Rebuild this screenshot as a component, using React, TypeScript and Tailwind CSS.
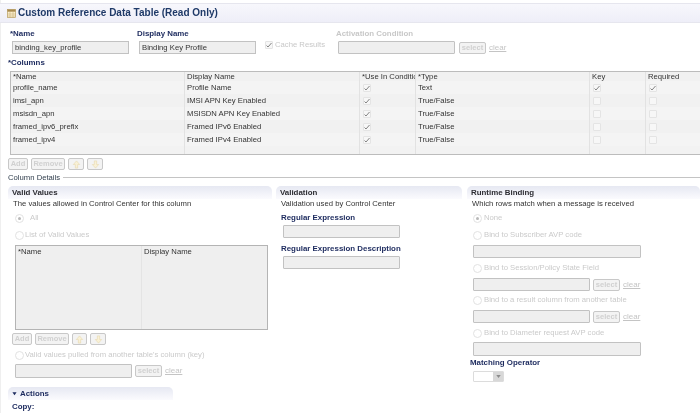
import React from "react";

const Inp = ({ w, className = "" }: { w: string; className?: string }) => (
  <div className={`${w} h-[13px] shrink-0 rounded-[1px] border border-[#c2c2c2] bg-[#efefef] ${className}`} />
);
const Btn = ({ children, w }: { children?: React.ReactNode; w: string }) => (
  <div className={`${w} flex h-[12px] shrink-0 items-center justify-center rounded-[2px] border border-[#c8c8c8] bg-[#f3f3f3] text-[7.5px] leading-none font-bold text-[#d0d0d0]`}>{children}</div>
);
const Arrow = ({ down }: { down?: boolean }) => (
  <svg viewBox="0 0 10 10" className={`h-[9px] w-[9px] ${down ? "rotate-180" : ""}`}>
    <path d="M5 1 8.5 5H6.3V9H3.7V5H1.5Z" fill="#f9f1d6" stroke="#e8dbb0" strokeWidth="0.7" />
  </svg>
);
const SelectClear = ({ gap = "ml-[3px]" }: { gap?: string }) => (
  <>
    <div className={gap}><Btn w="w-[27px]">select</Btn></div>
    <span className="ml-[3px] text-[8px] leading-none text-[#c4c4c4] underline">clear</span>
  </>
);
const Radio = ({ on, label, className = "", labelGap = "ml-[1px]" }: { on?: boolean; label: string; className?: string; labelGap?: string }) => (
  <div className={`flex h-[10px] items-center text-[7.7px] leading-none text-[#cacaca] ${className}`}>
    <span className="flex h-[9px] w-[9px] shrink-0 items-center justify-center rounded-full border border-[#e2e2e2] bg-white">
      {on && <span className="h-[3px] w-[3px] rounded-full bg-[#b8b8b8]" />}
    </span>
    <span className={`${labelGap} whitespace-nowrap`}>{label}</span>
  </div>
);
const Check = ({ on }: { on?: boolean }) => (
  <span className="flex h-[8px] w-[8px] shrink-0 items-center justify-center rounded-[1px] border border-[#e4e4e4] bg-[#f7f7f7]">
    {on && (
      <svg viewBox="0 0 8 8" className="h-[8px] w-[8px] shrink-0">
        <path d="M1.5 4.5 3 6 6.5 2" fill="none" stroke="#666" strokeWidth="0.8" />
      </svg>
    )}
  </span>
);
const Label = ({ children, className = "" }: { children: React.ReactNode; className?: string }) => (
  <div className={`whitespace-nowrap text-[7.9px] leading-[10px] font-bold text-[#1c2a5e] ${className}`}>{children}</div>
);
const SectionHead = ({ children, w }: { children: React.ReactNode; w: string }) => (
  <div className={`${w} flex h-[13px] items-center rounded-t-[5px] bg-gradient-to-b from-[#e6e8f2] to-[#fbfbfe] pl-[4px] text-[7.9px] font-bold text-[#2d2d33]`}>{children}</div>
);

const rows = [
  ["profile_name", "Profile Name", "Text", true],
  ["imsi_apn", "IMSI APN Key Enabled", "True/False", false],
  ["msisdn_apn", "MSISDN APN Key Enabled", "True/False", false],
  ["framed_ipv6_prefix", "Framed IPv6 Enabled", "True/False", false],
  ["framed_ipv4", "Framed IPv4 Enabled", "True/False", false],
] as const;
const cell = "flex shrink-0 items-center overflow-hidden whitespace-nowrap border-r border-[#e2e2e2] pl-[2px]";

export default function App() {
  return (
    <div className="h-[413px] w-[700px] overflow-hidden bg-white pt-[3px] text-[7.7px] text-[#333] shadow-[inset_1px_0_0_#efefef] blur-[0.3px]" style={{ fontFamily: '"Liberation Sans", Arial, sans-serif' }}>
      <div className="flex h-[20px] items-center border-y border-[#e6e6ee] bg-gradient-to-b from-[#f7f7fc] to-[#eeeef8] pl-[7px]">
        <svg viewBox="0 0 9 9" className="h-[9px] w-[9px]">
          <rect x="0.5" y="0.5" width="8" height="8" fill="#fbeecb" stroke="#b89e62" strokeWidth="0.7" />
          <rect x="0.5" y="0.5" width="8" height="2.2" fill="#a88a4e" />
          <path d="M0 5H9M0 7H9M3 2V9M6 2V9" stroke="#c0a873" strokeWidth="0.5" />
        </svg>
        <div className="ml-[2px] text-[10px] leading-none font-bold text-[#1f3a68]">Custom Reference Data Table (Read Only)</div>
      </div>

      <div className="mt-[6px] flex h-[27px]">
        <div className="ml-[10px] w-[127px]">
          <Label>*Name</Label>
          <div className="mt-[2px] ml-[2px] flex h-[13px] w-[117px] items-center border border-[#c2c2c2] bg-[#efefef] pl-[2px] leading-none">binding_key_profile</div>
        </div>
        <div className="w-[128px]">
          <Label>Display Name</Label>
          <div className="mt-[2px] ml-[2px] flex h-[13px] w-[117px] items-center border border-[#c2c2c2] bg-[#efefef] pl-[2px] leading-none">Binding Key Profile</div>
        </div>
        <div className="mt-[12px] flex h-[8px] w-[71px] items-center text-[#c8c8c8]">
          <Check on />
          <span className="ml-[2px] leading-none">Cache Results</span>
        </div>
        <div>
          <Label className="text-[#c8c8c8]">Activation Condition</Label>
          <div className="mt-[2px] ml-[2px] flex items-center">
            <Inp w="w-[117px]" />
            <SelectClear gap="ml-[4px]" />
          </div>
        </div>
      </div>

      <Label className="mt-[2px] ml-[8px]">*Columns</Label>
      <div className="mt-[3px] ml-[10px] h-[84px] border-y border-l border-[#bcbcbc] bg-[#f2f2f2]">
        <div className="flex h-[9px] bg-[#f1f1f1] leading-none">
          <div className={`${cell} w-[174px]`}>*Name</div>
          <div className={`${cell} w-[175px]`}>Display Name</div>
          <div className={`${cell} w-[56px]`}>*Use In Conditions</div>
          <div className={`${cell} w-[174px]`}>*Type</div>
          <div className={`${cell} w-[56px]`}>Key</div>
          <div className={`${cell} flex-1 border-r-0`}>Required</div>
        </div>
        {rows.map(([n, d, t, key], i) => (
          <div key={n} className={`flex h-[13px] leading-none ${i % 2 ? "bg-[#f1f1f1]" : "bg-[#f4f4f4]"}`}>
            <div className={`${cell} w-[174px]`}>{n}</div>
            <div className={`${cell} w-[175px]`}>{d}</div>
            <div className={`${cell} w-[56px] pl-[3px]`}><Check on /></div>
            <div className={`${cell} w-[174px]`}>{t}</div>
            <div className={`${cell} w-[56px] pl-[3px]`}><Check on={key} /></div>
            <div className={`${cell} flex-1 border-r-0 pl-[3px]`}><Check on={key} /></div>
          </div>
        ))}
        <div className="flex h-[8px]">
          <div className={`${cell} w-[174px]`} />
          <div className={`${cell} w-[175px]`} />
          <div className={`${cell} w-[56px]`} />
          <div className={`${cell} w-[174px]`} />
          <div className={`${cell} w-[56px]`} />
        </div>
      </div>

      <div className="mt-[3px] ml-[8px] flex gap-[3px]">
        <Btn w="w-[20px]">Add</Btn>
        <Btn w="w-[34px]">Remove</Btn>
        <Btn w="w-[16px]"><Arrow /></Btn>
        <Btn w="w-[16px]"><Arrow down /></Btn>
      </div>

      <div className="mt-[2px] ml-[8px] flex h-[11px] items-center">
        <span className="leading-none text-[#33404f]">Column Details</span>
        <div className="ml-[3px] h-px flex-1 bg-[#c4c4c4]" />
      </div>

      <div className="mt-[3px] flex">
        <div className="ml-[8px] w-[264px]">
          <SectionHead w="w-[264px]">Valid Values</SectionHead>
          <div className="ml-[5px] h-[9px] leading-[9px]">The values allowed in Control Center for this column</div>
          <Radio on label="All" labelGap="ml-[6px]" className="mt-[5px] ml-[7px]" />
          <Radio label="List of Valid Values" className="mt-[7px] ml-[7px]" />
          <div className="mt-[5px] ml-[7px] h-[85px] w-[253px] border border-[#b4b4b4] bg-[#efefef]">
            <div className="flex h-full leading-none">
              <div className="h-full w-[126px] border-r border-[#e4e4e4] pt-[2px] pl-[2px]">*Name</div>
              <div className="pt-[2px] pl-[2px]">Display Name</div>
            </div>
          </div>
          <div className="mt-[3px] ml-[4px] flex gap-[3px]">
            <Btn w="w-[20px]">Add</Btn>
            <Btn w="w-[34px]">Remove</Btn>
            <Btn w="w-[15px]"><Arrow /></Btn>
            <Btn w="w-[16px]"><Arrow down /></Btn>
          </div>
          <Radio label="Valid values pulled from another table's column (key)" className="mt-[5px] ml-[7px]" />
          <div className="mt-[4px] ml-[7px] flex items-center">
            <Inp w="w-[117px] h-[14px]" />
            <SelectClear />
          </div>
          <div className="mt-[9px] flex h-[13px] w-[165px] items-center rounded-t-[5px] bg-gradient-to-b from-[#e6e8f2] to-[#fbfbfe] pl-[4px] text-[7.9px] font-bold text-[#1c2a5e]">
            <svg viewBox="0 0 6 6" className="h-[5px] w-[5px]"><path d="M0.5 1.5H5.5L3 5Z" fill="#1c2a5e" /></svg>
            <span className="ml-[3px]">Actions</span>
          </div>
          <Label className="mt-[2px] ml-[4px]">Copy:</Label>
        </div>

        <div className="ml-[4px] w-[186px]">
          <SectionHead w="w-[186px]">Validation</SectionHead>
          <div className="ml-[5px] h-[9px] leading-[9px]">Validation used by Control Center</div>
          <Label className="mt-[5px] ml-[5px]">Regular Expression</Label>
          <Inp w="w-[117px]" className="mt-[2px] ml-[7px]" />
          <Label className="mt-[6px] ml-[5px]">Regular Expression Description</Label>
          <Inp w="w-[117px]" className="mt-[2px] ml-[7px]" />
        </div>

        <div className="ml-[5px] flex-1">
          <SectionHead w="w-full">Runtime Binding</SectionHead>
          <div className="ml-[5px] h-[9px] leading-[9px]">Which rows match when a message is received</div>
          <Radio on label="None" labelGap="ml-[2px]" className="mt-[5px] ml-[6px]" />
          <Radio label="Bind to Subscriber AVP code" labelGap="ml-[2px]" className="mt-[7px] ml-[6px]" />
          <Inp w="w-[168px]" className="mt-[5px] ml-[6px]" />
          <Radio label="Bind to Session/Policy State Field" labelGap="ml-[2px]" className="mt-[5px] ml-[6px]" />
          <div className="mt-[5px] ml-[6px] flex items-center"><Inp w="w-[117px]" /><SelectClear /></div>
          <Radio label="Bind to a result column from another table" labelGap="ml-[2px]" className="mt-[4px] ml-[6px]" />
          <div className="mt-[5px] ml-[6px] flex items-center"><Inp w="w-[117px]" /><SelectClear /></div>
          <Radio label="Bind to Diameter request AVP code" labelGap="ml-[2px]" className="mt-[5px] ml-[6px]" />
          <Inp w="w-[168px] h-[14px]" className="mt-[4px] ml-[6px]" />
          <Label className="mt-[2px] ml-[3px]">Matching Operator</Label>
          <div className="mt-[3px] ml-[6px] flex h-[11px] w-[31px] items-center justify-end rounded-[1px] border border-[#dcdcdc] bg-white">
            <span className="flex h-full w-[10px] items-center justify-center bg-[#d8d8d8]">
              <svg viewBox="0 0 6 4" className="h-[3px] w-[5px]"><path d="M0 0H6L3 4Z" fill="#8c8c8c" /></svg>
            </span>
          </div>
        </div>
      </div>
    </div>
  );
}
